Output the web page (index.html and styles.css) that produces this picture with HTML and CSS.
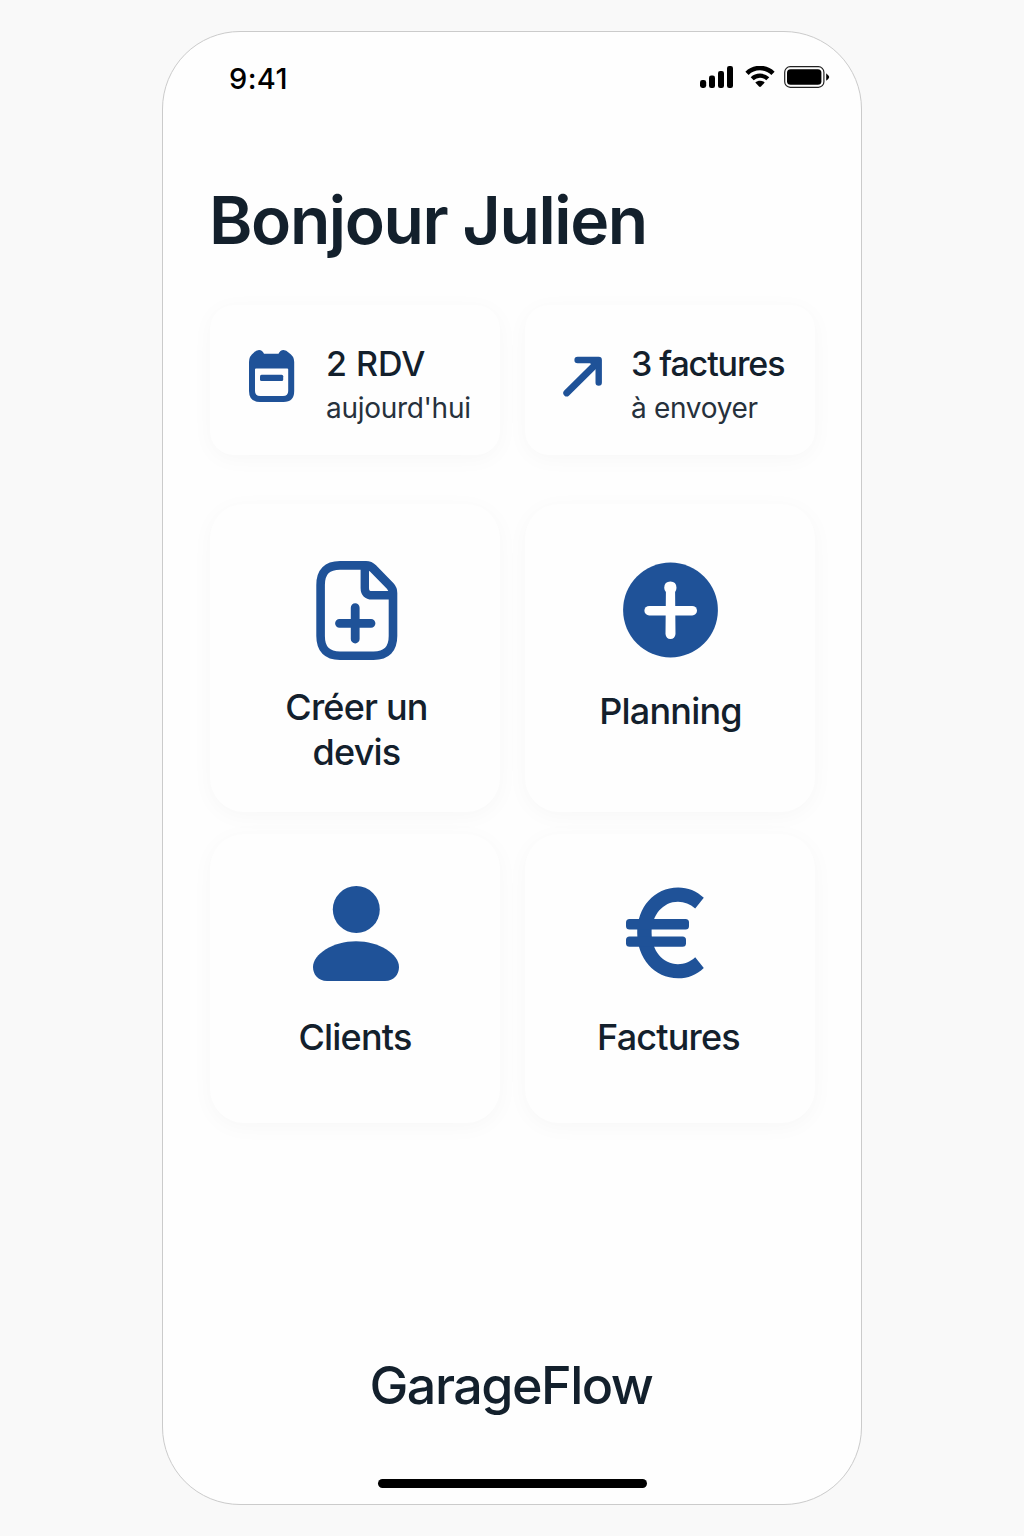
FILE: index.html
```
<!DOCTYPE html>
<html lang="fr">

<head>
    <meta charset="UTF-8">
    <meta name="viewport" content="width=device-width, initial-scale=1.0">
    <title>GarageFlow</title>
    <link rel="stylesheet" href="styles.css">
</head>

<body>

    <div class="phone">
        <div class="status-bar">
            <span class="time">9:41</span>
            <div class="status-icons">
                <svg class="signal" width="34" height="22" viewBox="0 0 34 22">
                    <rect x="0" y="14" width="6.2" height="8" rx="2.4" />
                    <rect x="9" y="9.5" width="6" height="12.5" rx="2.2" />
                    <rect x="18" y="5" width="6" height="17" rx="2.2" />
                    <rect x="27" y="0" width="6" height="22" rx="2.2" />
                </svg>
                <svg class="wifi" width="30" height="22" viewBox="0 0 30 22">
                    <path d="M2 7.3 C9 0.3 21 0.3 28 7.3" fill="none" stroke="#000" stroke-width="4.6" />
                    <path d="M7.2 12.8 C11.5 8.6 18.5 8.6 22.8 12.8" fill="none" stroke="#000" stroke-width="4.3" />
                    <path d="M10.3 16.4 C13 14.2 17 14.2 19.7 16.4 L16 20.6 Q15 21.5 14 20.6 Z" />
                </svg>
                <svg class="battery" width="46" height="22" viewBox="0 0 46 22">
                    <rect x="0.7" y="0.7" width="39.2" height="20.6" rx="5.5" fill="none" stroke="#222" stroke-width="1.2" />
                    <rect x="3" y="3.2" width="34.4" height="15.6" rx="3.6" />
                    <path d="M42.2 7.2 Q45.6 10.2 45.2 11.2 Q44.8 13 42.2 14.8 Z" />
                </svg>
            </div>
        </div>

        <h1 class="greeting">Bonjour Julien</h1>

        <div class="stats">
            <div class="stat-card">
                <svg class="calendar-icon" width="46" height="52" viewBox="0 0 46 52">
                    <path fill-rule="evenodd" d="M5 2.5 Q7 0 10 0 Q13.5 0 15 3.8 H29.5 Q31 0 34.5 0 Q37.5 0 39.5 2.5 Q45.2 6 45.2 12 V41 Q45.2 52 34.5 52 H11 Q0 52 0 41 V12 Q0 6 5 2.5 Z M7 18.5 Q6 18.5 6 19.5 V41 Q6 46 11.2 46 H34 Q39.2 46 39.2 41 V19.5 Q39.2 18.5 38.2 18.5 Z" />
                    <rect x="11" y="24.7" width="23.2" height="6.3" rx="1.5" />
                </svg>
                <div class="stat-text">
                    <strong class="rdv">2 RDV</strong>
                    <span class="today">aujourd'hui</span>
                </div>
            </div>
            <div class="stat-card">
                <svg class="arrow-icon" width="40" height="42" viewBox="0 0 40 42">
                    <path d="M3.7 37 L34 7" fill="none" stroke="#1f5298" stroke-width="6.8" stroke-linecap="round" />
                    <path d="M14.6 4 H35.7 V26.5" fill="none" stroke="#1f5298" stroke-width="6.4" stroke-linecap="round" stroke-linejoin="round" />
                    <path d="M25 5 H36 V16 Z" />
                </svg>
                <div class="stat-text">
                    <strong class="bills">3 factures</strong>
                    <span class="send">à envoyer</span>
                </div>
            </div>
        </div>

        <div class="tiles">
            <a class="tile quote">
                <svg width="82" height="99" viewBox="0 0 82 99">
                    <path d="M24 4.4 H50 Q54 4.4 57 7.4 L74.2 25 Q77 28 77 32 V75 Q77 94.7 57.500 94.7 H24 Q4.6 94.7 4.6 75 V24 Q4.6 4.4 24 4.4 Z" fill="none" stroke="#1f5298" stroke-width="8.6" />
                    <path d="M48.800 5 V27 Q48.8 34.3 56 34.3 H77" fill="none" stroke="#1f5298" stroke-width="8.4" />
                    <path d="M39.2 46.7 V78 M23.5 62.3 H55" fill="none" stroke="#1f5298" stroke-width="8.8" stroke-linecap="round" />
                </svg>
                <span>Créer un<br>devis</span>
            </a>
            <a class="tile planning">
                <svg width="96" height="96" viewBox="0 0 96 96">
                    <circle cx="47.5" cy="48" r="47.4" />
                    <path d="M26.2 48.7 H69.2" fill="none" stroke="#fff" stroke-width="9.6" stroke-linecap="round" />
                    <path d="M41.2 25.7 Q41.4 19.5 47.4 19.5 Q53.3 19.5 53.5 25.7 Q53.5 28 52.1 30 L52.5 72 Q51.9 77 47.4 77 Q43.1 77 42.5 72 L42.9 30 Q41.2 28 41.2 25.7 Z" fill="#fff" />
                </svg>
                <span>Planning</span>
            </a>
            <a class="tile clients">
                <svg width="86" height="96" viewBox="0 0 86 96">
                    <circle cx="43.3" cy="23.5" r="23.5" />
                    <path d="M14 95 C5 95 0 88.5 0 81 C0 68 20 55.2 43 55.2 C66 55.2 86 68 86 81 C86 88.5 81 95 72 95 Z" />
                </svg>
                <span>Clients</span>
            </a>
            <a class="tile invoices">
                <svg width="80" height="92" viewBox="0 0 80 92">
                    <path d="M77.8 10.8 C70.5 4 62 0.5 52.2 0.5 C28 0.5 11.2 20.5 11.2 45.8 C11.2 71.2 28 91.3 52.2 91.3 C62 91.3 70.5 87.7 77.8 80.9 L69.2 70.3 C64 75 58.5 77.2 52 77.2 C37 77.2 25.6 64 25.6 45.8 C25.6 28 37 14.7 52 14.7 C58.5 14.7 64 17 69.2 21.5 Z" />
                    <rect x="0" y="32" width="63" height="10.4" rx="3.5" />
                    <rect x="0" y="49.5" width="60" height="10.2" rx="3.5" />
                </svg>
                <span>Factures</span>
            </a>
        </div>

        <div class="brand">GarageFlow</div>
        <div class="home-indicator"></div>
    </div>

</body>

</html>
```
FILE: styles.css
```
* {
    box-sizing: border-box;
}

body {
    font-family: Inter, 'Liberation Sans', sans-serif;
    margin: 0;
    height: 1536px;
    padding: 31px 162px;
    background-color: #f9f9f9;
    color: #13202c;
}

.phone {
    display: flex;
    flex-direction: column;
    width: 700px;
    height: 1474px;
    padding: 31px 46px 0 47px;
    border: 1px solid #cbcbcb;
    border-radius: 78px;
    background-color: #fefefe;
}

.status-bar {
    display: flex;
    justify-content: space-between;
    align-items: center;
    height: 30px;
    padding-left: 19px;
    margin-right: -15px;
    color: #000;
}

.time {
    padding-top: 2px;
    font-size: 29px;
    font-weight: 550;
    line-height: 30px;
    letter-spacing: 0.4px;
}

.status-icons {
    display: flex;
    align-items: center;
    margin-top: -2px;
}

.wifi {
    margin-left: 11px;
}

.battery {
    margin-left: 9px;
}

.greeting {
    margin: 87px 0 45px -1px;
    font-size: 66px;
    font-weight: 560;
    line-height: 80px;
    letter-spacing: -1.4px;
    white-space: nowrap;
}

.stats {
    display: grid;
    grid-template-columns: 1fr 1fr;
    gap: 25px;
}

.stat-card {
    display: flex;
    align-items: flex-start;
    height: 150px;
    padding: 36px 0 0 38px;
    border-radius: 24px;
    background-color: #fefefe;
    box-shadow: 0 4px 22px rgba(0, 0, 0, 0.03);
}

.stat-card svg,
.tile svg {
    flex: none;
    fill: #1f5298;
}

.calendar-icon {
    margin: 9px 31px 0 1px;
}

.arrow-icon {
    margin: 15px 28px 0 0;
}

.stat-text {
    display: flex;
    flex-direction: column;
    padding-top: 1px;
    line-height: 44px;
    white-space: nowrap;
}

.stat-text strong {
    font-size: 34px;
    font-weight: 500;
}

.stat-text .bills {
    letter-spacing: -1.1px;
}

.stat-text span {
    font-size: 28px;
    letter-spacing: -0.3px;
    color: #26313c;
}

.tiles {
    display: grid;
    grid-template-columns: 1fr 1fr;
    grid-template-rows: 308px 289px;
    gap: 22px 25px;
    margin-top: 49px;
}

.tile {
    display: flex;
    flex-direction: column;
    align-items: center;
    border-radius: 34px;
    background-color: #fefefe;
    box-shadow: 0 4px 22px rgba(0, 0, 0, 0.03);
    font-size: 36px;
    font-weight: 500;
    line-height: 45px;
    letter-spacing: -0.8px;
    text-align: center;
}

.quote {
    padding: 57px 0 0 3px;
}

.quote span {
    margin-top: 25px;
}

.planning {
    padding: 58px 0 0 1px;
}

.planning span {
    margin-top: 31px;
}

.clients {
    padding: 52px 0 0 2px;
}

.clients span {
    margin: 33px 2px 0 0;
}

.invoices {
    padding-top: 53px;
}

.invoices svg {
    margin-right: 9px;
}

.invoices span {
    margin: 36px 3px 0 0;
}

.brand {
    margin: 233px 3px 0 0;
    font-size: 52px;
    font-weight: 540;
    line-height: 60px;
    letter-spacing: -1.5px;
    text-align: center;
}

.home-indicator {
    width: 269px;
    height: 9px;
    margin: 63px auto 0;
    border-radius: 5px;
    background-color: #000;
}
```
